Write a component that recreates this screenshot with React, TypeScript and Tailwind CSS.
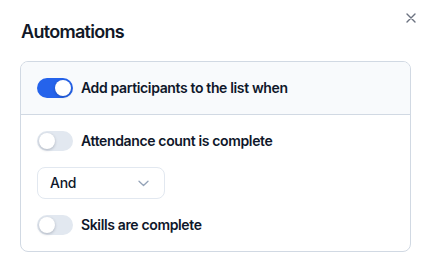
import React from "react";

function Toggle({ on }: { on: boolean }) {
  return (
    <span
      className={
        "relative inline-flex h-5 w-9 shrink-0 items-center rounded-full " +
        (on ? "bg-[#2563eb]" : "bg-[#e2e8f0]")
      }
    >
      <span
        className={
          "absolute top-[2px] h-4 w-4 rounded-full bg-white shadow-[0_1px_3px_rgba(15,23,42,0.25)] " +
          (on ? "left-[18px]" : "left-[2px]")
        }
      />
    </span>
  );
}

export default function App() {
  return (
    <div
      className="relative h-[258px] w-[426px] bg-white pl-5 pr-[15px] pt-5"
      style={{ fontFamily: "Inter, 'Noto Sans', sans-serif" }}
    >
      <button className="absolute right-[9px] top-[12px] flex h-3 w-3 items-center justify-center text-[#6b7280]">
        <svg width="10" height="10" viewBox="0 0 10 10" fill="none" stroke="currentColor" strokeWidth="1.4" strokeLinecap="round">
          <path d="M1 1L9 9M9 1L1 9" />
        </svg>
      </button>
      <h2 className="mb-[17px] pl-px text-lg font-semibold leading-6 tracking-[-0.7px] text-[#111827]">Automations</h2>
      <div className="overflow-hidden rounded-lg border border-[#d1d9e3]">
        <div className="flex items-center gap-2 border-b border-[#d1d9e3] bg-[#f8fafc] p-4">
          <Toggle on />
          <span className="text-sm font-semibold leading-5 tracking-[-0.36px] text-[#0f172a]">Add participants to the list when</span>
        </div>
        <div className="flex flex-col items-start gap-4 p-4">
          <div className="flex items-center gap-2">
            <Toggle on={false} />
            <span className="text-sm font-semibold leading-5 tracking-[-0.36px] text-[#0f172a]">Attendance count is complete</span>
          </div>
          <div className="flex h-8 w-[128px] items-center justify-between rounded-lg border border-[#e2e8f0] bg-white pl-3 pr-[15px]">
            <span className="text-sm font-medium tracking-[-0.3px] text-[#0f172a]">And</span>
            <svg width="11" height="7" viewBox="0 0 11 7" fill="none" stroke="#94a3b8" strokeWidth="1.3" strokeLinecap="round" strokeLinejoin="round">
              <path d="M1 1.2L5.5 5.5L10 1.2" />
            </svg>
          </div>
          <div className="flex items-center gap-2">
            <Toggle on={false} />
            <span className="text-sm font-semibold leading-5 tracking-[-0.36px] text-[#0f172a]">Skills are complete</span>
          </div>
        </div>
      </div>
    </div>
  );
}
